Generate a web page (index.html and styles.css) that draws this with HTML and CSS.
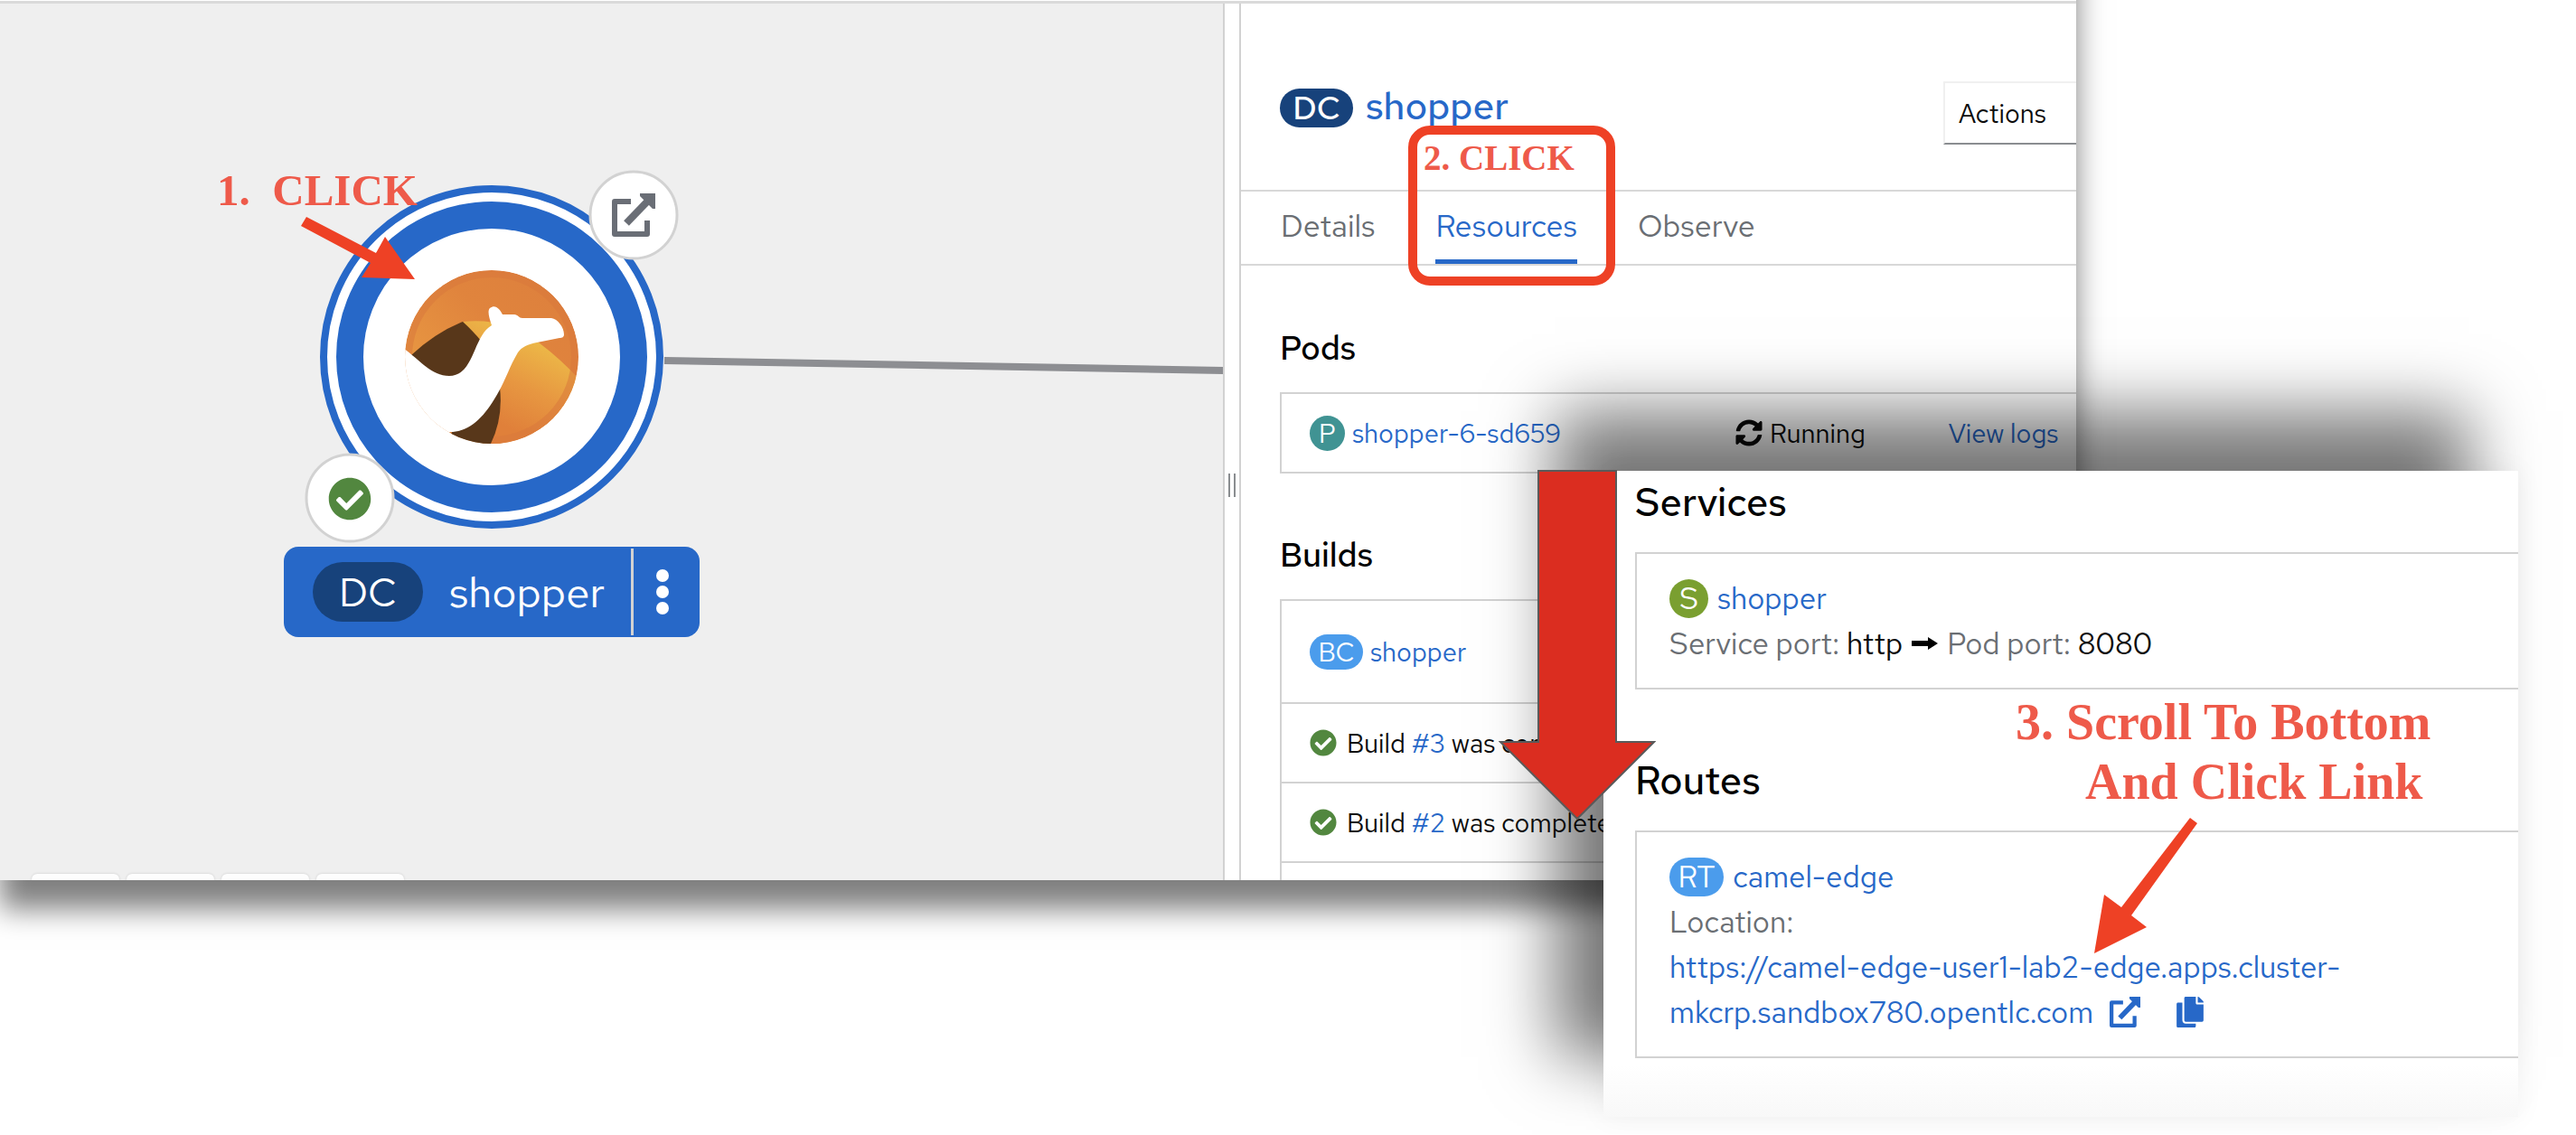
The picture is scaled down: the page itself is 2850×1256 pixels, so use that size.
FILE: index.html
```html
<!DOCTYPE html>
<html lang="en">
<head>
<meta charset="utf-8">
<title>Topology – shopper</title>
<link rel="stylesheet" href="styles.css">
</head>
<body>
<svg class="defs" aria-hidden="true">
  <symbol id="i-external" viewBox="0 0 48 48">
    <path d="M21 9H3V45H39V30" fill="none" stroke="currentColor" stroke-width="6" stroke-linejoin="round"/>
    <path d="M16 33L43 5" fill="none" stroke="currentColor" stroke-width="8"/>
    <path d="M31 0H48V17H45L31 3Z" fill="currentColor"/>
  </symbol>
  <symbol id="i-check" viewBox="0 0 512 512">
    <circle cx="256" cy="256" r="230" fill="#fff"/>
    <path fill="#52873f" d="M504 256c0 136.967-111.033 248-248 248S8 392.967 8 256 119.033 8 256 8s248 111.033 248 248zM227.314 387.314l184-184c6.248-6.248 6.248-16.379 0-22.627l-22.627-22.627c-6.248-6.249-16.379-6.249-22.628 0L216 308.118l-70.059-70.059c-6.248-6.248-16.379-6.248-22.628 0l-22.627 22.627c-6.248 6.248-6.248 16.379 0 22.627l104 104c6.249 6.249 16.379 6.249 22.628.001z"/>
  </symbol>
  <symbol id="i-sync" viewBox="0 0 512 512">
    <path fill="currentColor" d="M370.72 133.28C339.458 104.008 298.888 87.962 255.848 88c-77.458.068-144.328 53.178-162.791 126.85-1.344 5.363-6.122 9.15-11.651 9.15H24.103c-7.498 0-13.194-6.807-11.807-14.176C33.933 94.924 134.813 8 256 8c66.448 0 126.791 26.136 171.315 68.685L463.03 40.97C478.149 25.851 504 36.559 504 57.941V192c0 13.255-10.745 24-24 24H345.941c-21.382 0-32.09-25.851-16.971-40.971l41.75-41.749zM32 296h134.059c21.382 0 32.09 25.851 16.971 40.971l-41.75 41.75c31.262 29.273 71.835 45.319 114.876 45.28 77.418-.07 144.315-53.144 162.787-126.849 1.344-5.363 6.122-9.15 11.651-9.15h57.304c7.498 0 13.194 6.807 11.807 14.176C478.067 417.076 377.187 504 256 504c-66.448 0-126.791-26.136-171.315-68.685L48.97 471.03C33.851 486.149 8 475.441 8 454.059V320c0-13.255 10.745-24 24-24z"/>
  </symbol>
  <symbol id="i-copy" viewBox="0 0 448 512">
    <path fill="currentColor" d="M320 448v40c0 13.255-10.745 24-24 24H24c-13.255 0-24-10.745-24-24V120c0-13.255 10.745-24 24-24h72v296c0 30.879 25.121 56 56 56h168zm0-344V0H152c-13.255 0-24 10.745-24 24v368c0 13.255 10.745 24 24 24h272c13.255 0 24-10.745 24-24V128H344c-13.2 0-24-10.8-24-24zm120.971-31.029L375.029 7.029A24 24 0 0 0 358.059 0H352v96h96v-6.059a24 24 0 0 0-7.029-16.97z"/>
  </symbol>
</svg>

<main class="stage">
  <section class="console">
    <div class="canvas">
      <svg class="graph" viewBox="0 4 1353 972" preserveAspectRatio="xMinYMin slice" aria-hidden="true">
        <defs>
          <clipPath id="logo-clip"><circle cx="545" cy="396" r="96"/></clipPath>
          <linearGradient id="sky" x1="0" y1="1" x2="1" y2="0">
            <stop offset="0" stop-color="#eda445"/><stop offset=".6" stop-color="#e0843d"/><stop offset="1" stop-color="#dd7f3d"/>
          </linearGradient>
          <linearGradient id="dune" gradientUnits="userSpaceOnUse" x1="608" y1="388" x2="565" y2="475">
            <stop offset="0" stop-color="#ecb647"/><stop offset=".5" stop-color="#e79741"/><stop offset="1" stop-color="#e0803a"/>
          </linearGradient>
        </defs>
        <path d="M735 399L1360 410" stroke="#8d8e92" stroke-width="8"/>
        <g transform="translate(-1 -1)">
        <circle cx="545" cy="396" r="186" fill="#fff" stroke="#2768c8" stroke-width="8"/>
        <circle cx="545" cy="396" r="157" fill="#fff" stroke="#2768c8" stroke-width="30"/>
        <g clip-path="url(#logo-clip)">
          <circle cx="545" cy="396" r="96" fill="url(#sky)"/>
          <path d="M513 357Q560 352 597 380Q622 399 641 420V500H540V400Z" fill="url(#dune)"/>
          <circle cx="545" cy="396" r="92" fill="none" stroke="#d9783c" stroke-opacity=".55" stroke-width="8"/>
          <path d="M456 394Q483 369 513 357Q523 366 534 379L520 420H480Z" fill="#58371a"/>
          <path d="M554 430Q558 464 543 494H495L505 470Z" fill="#58371a"/>
          <path d="M447 386C463 397 478 417 498 417C526 417 524 373 545 361C542 352 540 345 543 342C549 337 554 343 557 349H570C574 349 575 353 579 353H611C618 354 625 363 625 371C625 374 623 375 620 375L595 380C585 382 578 385 574 391C565 406 560 422 553 434C538 461 522 479 499 479L470 500H440Z" fill="#fff"/>
        </g>
        <g fill="#fff" stroke="#d2d2d2" stroke-width="3">
          <circle cx="702" cy="239" r="48"/><circle cx="388" cy="552" r="48"/>
        </g>
        <use href="#i-external" x="678" y="215" width="48" height="48" color="#6a6e76"/>
        <use href="#i-check" x="364" y="529" width="48" height="48"/>
        </g>
        <path d="M333 250L339 240L416 280L426 262L459 309L400 307L410 291Z" fill="#ee4125"/>
      </svg>
      <p class="note note-1">1.  CLICK</p>
      <div class="node-label">
        <span class="pill pill-node">DC</span>
        <span class="node-name">shopper</span>
        <button class="kebab" type="button" aria-label="Node actions"><i></i><i></i><i></i></button>
      </div>
      <div class="toolbar">
        <button type="button" aria-label="Zoom in"></button>
        <button type="button" aria-label="Zoom out"></button>
        <button type="button" aria-label="Fit to screen"></button>
        <button type="button" aria-label="Reset view"></button>
      </div>
    </div>

    <div class="resizer"><i></i><i></i></div>

    <aside class="pane">
      <header class="pane-head">
        <h1><span class="pill pill-title">DC</span><a href="#shopper">shopper</a></h1>
        <button class="actions" type="button">Actions</button>
      </header>
      <nav class="tabs">
        <a href="#details">Details</a>
        <a href="#resources" class="current">Resources</a>
        <a href="#observe">Observe</a>
      </nav>
      <section class="group">
        <h2>Pods</h2>
        <ul class="list">
          <li class="pod">
            <span class="item"><span class="pill pill-pod">P</span><a href="#pod">shopper-6-sd659</a></span>
            <span class="item"><svg class="sync"><use href="#i-sync"/></svg>Running</span>
            <a href="#logs">View logs</a>
          </li>
        </ul>
      </section>
      <section class="group">
        <h2>Builds</h2>
        <ul class="list list-open">
          <li class="config"><span class="item"><span class="pill pill-bc">BC</span><a href="#bc">shopper</a></span></li>
          <li class="build"><svg class="check"><use href="#i-check"/></svg><span>Build <a href="#b3">#3</a> was complete</span></li>
          <li class="build"><svg class="check"><use href="#i-check"/></svg><span>Build <a href="#b2">#2</a> was complete</span></li>
          <li class="cut"></li>
        </ul>
      </section>
      <div class="frame"><p class="note note-2">2. CLICK</p></div>
    </aside>
  </section>

  <section class="detail">
    <h2>Services</h2>
    <div class="box">
      <div class="line"><span class="pill pill-s">S</span><a href="#service">shopper</a></div>
      <div class="line muted"><span>Service port: <b>http</b></span>
        <svg class="to" viewBox="0 0 29 16"><path d="M0 5H18V1L29 8L18 15V11H0Z"/></svg>
        <span>Pod port: <b>8080</b></span></div>
    </div>
    <h2 class="next">Routes</h2>
    <div class="box">
      <div class="line"><span class="pill pill-rt">RT</span><a href="#route">camel-edge</a></div>
      <p class="muted">Location:</p>
      <p><a href="#location">https://camel-edge-user1-lab2-edge.apps.cluster-mkcrp.sandbox780.opentlc.com<svg class="ext"><use href="#i-external"/></svg></a><button class="copy" type="button" aria-label="Copy to clipboard"><svg><use href="#i-copy"/></svg></button></p>
    </div>
    <svg class="scroll-arrow" viewBox="0 0 174 388" aria-hidden="true">
      <path d="M44 1H130V301H172L87 386L2 301H44Z" fill="#db2d20" stroke="#5a5a5a" stroke-width="2"/>
    </svg>
    <p class="note note-3">3. Scroll To Bottom <span>And Click Link</span></p>
    <svg class="link-arrow" viewBox="0 0 120 160" aria-hidden="true">
      <path d="M107 6L115 12L42 114L59 127L1 156L12 91L31 105Z" fill="#ee4125"/>
    </svg>
  </section>
</main>
</body>
</html>
```
FILE: styles.css
```css
* { box-sizing: border-box; margin: 0; padding: 0; }
body { background: #fff; color: #0c0c0c; font-family: "Red Hat Text", Inter, "Noto Sans", sans-serif; font-size: 29px; }
a { color: #2768c8; text-decoration: none; }
ul { list-style: none; }
button { border: 0; background: none; font: inherit; color: inherit; }
h2 { font-weight: 500; color: #000; }
.defs { position: absolute; width: 0; height: 0; }

.stage { display: grid; overflow: hidden; padding-bottom: 19px; isolation: isolate; }
.stage > * { grid-area: 1 / 1; }

.console {
  position: relative;
  align-self: start;
  display: grid;
  grid-template-columns: minmax(0, 1fr) 20px 924px;
  width: calc(100% - 553px);
  margin-top: 1px;
  border-top: 3px solid #dadada;
  background: #fff;
}
/* The shadow starts above the page edge so that it runs down the whole side. */
.console::before {
  content: ""; position: absolute; inset: -90px 0 0; z-index: -1;
  box-shadow: 0 32px 30px rgba(0, 0, 0, .5);
}

.canvas { position: relative; display: flex; align-items: flex-end; overflow: hidden; background: #efefef; }
.graph { position: absolute; inset: 0; width: 100%; height: 100%; }

.note { color: #ee5a4a; font-family: "Liberation Serif", "Times New Roman", serif; font-weight: 700; white-space: pre; }
.note-1 { position: absolute; left: 240px; top: 179px; font-size: 49px; line-height: 56px; }
.note-2 { padding: 4px 7px; font-size: 39px; line-height: 44px; }
.note-3 { position: absolute; left: 456px; top: 245px; font-size: 56px; line-height: 66px; }
.note-3 span { display: block; margin-left: 77px; }

.pill { display: inline-flex; align-items: center; justify-content: center; flex: none; border-radius: 40px; color: #fff; }
.pill-node { width: 122px; height: 66px; background: #17427b; font-size: 44px; }
.pill-title { width: 81px; height: 43px; background: #17427b; font-size: 36px; }
.pill-pod { width: 39px; height: 39px; background: #409393; }
.pill-bc { width: 59px; height: 39px; background: #4b9cec; }
.pill-s { width: 43px; height: 43px; background: #7a9f30; }
.pill-rt { width: 60px; height: 43px; background: #4b9cec; }

.node-label {
  position: absolute; left: 314px; top: 601px;
  display: flex; align-items: center; gap: 29px;
  width: 460px; height: 100px; padding-left: 32px;
  border-radius: 16px; background: #2768c8; color: #fff;
}
.node-name { font-size: 47px; }
.kebab {
  display: flex; flex-direction: column; align-items: center; justify-content: center; gap: 4px;
  width: 76px; height: 96px; margin-left: auto; padding-right: 10px; border-left: 3px solid #d2d2d2;
}
.kebab i { width: 14px; height: 14px; border-radius: 50%; background: #fff; }

.toolbar { display: flex; gap: 8px; padding-left: 35px; }
.toolbar button { width: 97px; height: 7px; border-radius: 6px 6px 0 0; background: #fdfdfd; box-shadow: 0 0 3px rgba(0, 0, 0, .15); }

.resizer {
  display: flex; align-items: center; justify-content: center; gap: 4px;
  padding-top: 96px; border: solid #d2d2d2; border-width: 0 2px; background: #fff;
}
.resizer i { width: 2px; height: 26px; background: #8a8d90; }

.pane { position: relative; }
.pane-head { display: flex; align-items: flex-start; justify-content: space-between; padding: 86px 0 50px 43px; border-bottom: 2px solid #d8d8d8; }
.pane-head h1 { display: flex; align-items: baseline; gap: 14px; font-size: 42px; font-weight: 500; line-height: 54px; }
.actions {
  width: 147px; height: 70px; padding-left: 15px; text-align: left;
  border: solid #f0f0f0; border-width: 2px 0 2px 2px; border-bottom-color: #8a8d90;
}
.tabs { display: flex; gap: 67px; padding-left: 44px; border-bottom: 2px solid #d8d8d8; font-size: 34px; }
.tabs a { height: 80px; line-height: 76px; color: #6a6e73; border-bottom: 5px solid transparent; }
.tabs .current { color: #2768c8; border-color: #2768c8; }

.group { padding: 70px 0 0 43px; }
.group + .group { padding-top: 69px; }
.group h2 { margin-bottom: 28px; font-size: 37px; line-height: 42px; }
.list { border: 2px solid #d2d2d2; border-right: 0; }
.list-open { border-bottom: 0; }
.list li { padding-left: 31px; }
.list li + li { border-top: 2px solid #d2d2d2; }
.item { display: flex; align-items: center; gap: 8px; }
.pod { display: grid; grid-template-columns: 10fr 5fr 3fr; align-items: center; height: 86px; }
.sync { width: 30px; height: 30px; }
.config { display: flex; align-items: center; height: 112px; }
.build { display: flex; align-items: center; gap: 11px; height: 88px; }
.check { width: 30px; height: 30px; }
.list .cut { height: 21px; }

.frame { position: absolute; left: 185px; top: 135px; width: 229px; height: 177px; border: 10px solid #ee4125; border-radius: 24px; }

.detail {
  position: relative; align-self: start; justify-self: end;
  width: 1012px; margin: 521px 64px 0 0; padding: 11px 0 65px 35px;
  background: linear-gradient(#fff 92%, #f8f8f8);
  box-shadow: 0 0 30px rgba(0, 0, 0, .05), -54px -66px 70px rgba(0, 0, 0, .52);
  font-size: 33px; line-height: 50px;
}
.detail h2 { margin-bottom: 31px; font-size: 43px; line-height: 48px; }
.detail .next { margin-top: 77px; }
.box { padding: 24px 0 24px 36px; border: 2px solid #d2d2d2; border-right: 0; }
.line { display: flex; align-items: center; height: 50px; gap: 10px; }
.muted { color: #6a6e73; }
.muted b { color: #0c0c0c; font-weight: 400; }
.to { width: 29px; height: 16px; }
.ext { width: 34px; height: 34px; margin-left: 18px; vertical-align: -5px; }
.copy { margin-left: 40px; line-height: 34px; }
.copy svg { width: 30px; height: 34px; color: #2768c8; vertical-align: -5px; }
.scroll-arrow { position: absolute; left: -116px; top: -1px; width: 174px; height: 388px; }
.link-arrow { position: absolute; left: 542px; top: 378px; width: 120px; height: 160px; }
```
